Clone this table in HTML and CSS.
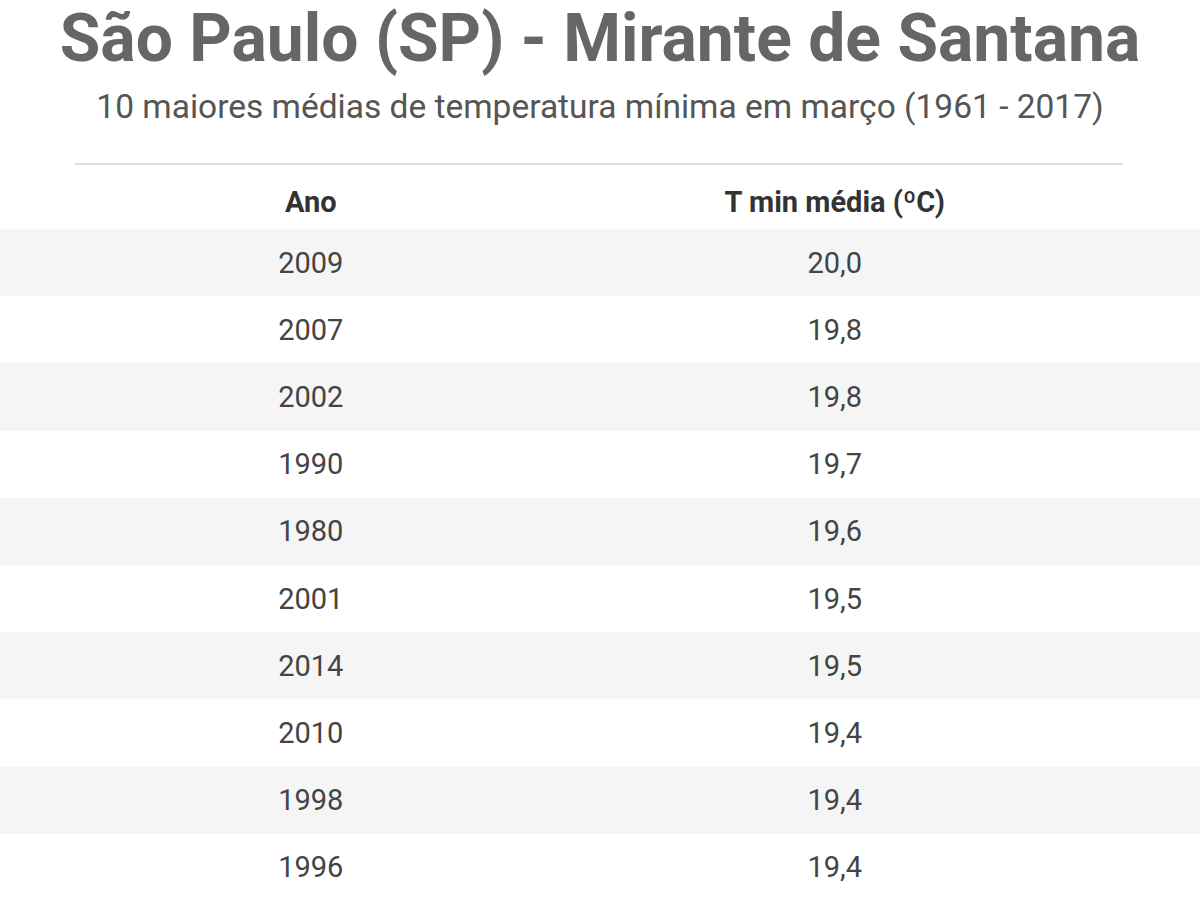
FILE: index.html
```html
<!DOCTYPE html>
<html lang="pt-BR">
<head>
<meta charset="utf-8">
<title>São Paulo (SP) - Mirante de Santana</title>
<link rel="stylesheet" href="styles.css">
</head>
<body>
<main class="chart">
  <header class="chart-head">
    <h1 class="title">São Paulo (SP) - Mirante de Santana</h1>
    <p class="subtitle">10 maiores médias de temperatura mínima em março (1961 - 2017)</p>
  </header>
  <div class="rule"></div>
  <div class="table">
    <div class="row head"><span>Ano</span><span>T min média (ºC)</span></div>
    <div class="row alt"><span>2009</span><span>20,0</span></div>
    <div class="row"><span>2007</span><span>19,8</span></div>
    <div class="row alt"><span>2002</span><span>19,8</span></div>
    <div class="row"><span>1990</span><span>19,7</span></div>
    <div class="row alt"><span>1980</span><span>19,6</span></div>
    <div class="row"><span>2001</span><span>19,5</span></div>
    <div class="row alt"><span>2014</span><span>19,5</span></div>
    <div class="row"><span>2010</span><span>19,4</span></div>
    <div class="row alt"><span>1998</span><span>19,4</span></div>
    <div class="row"><span>1996</span><span>19,4</span></div>
  </div>
</main>
</body>
</html>
```
FILE: styles.css
```css
html, body {
  margin: 0;
  padding: 0;
  background: #ffffff;
  overflow: hidden;
}
body {
  font-family: Roboto, "Liberation Sans", sans-serif;
}
.chart {
  width: 1200px;
  height: 900px;
  overflow: hidden;
}
.chart-head {
  padding-top: 0;
  text-align: center;
}
.title {
  margin: 0;
  font-size: 66px;
  line-height: normal;
  font-weight: 700;
  color: #666666;
}
.subtitle {
  margin: 13px 0 0;
  font-size: 33.5px;
  line-height: 34px;
  font-weight: 400;
  color: #555555;
}
.rule {
  margin: 39px 77px 0 75px;
  height: 2px;
  background: #dedede;
}
.row {
  display: grid;
  grid-template-columns: 45% 55%;
  align-items: center;
  padding: 0 77px 0 75px;
  height: 67.2px;
  font-size: 29px;
  color: #444444;
  text-align: center;
}
.row.head {
  height: auto;
  padding-top: 20px;
  padding-bottom: 10px;
  font-size: 29px;
  line-height: 34px;
  font-weight: 700;
  color: #333333;
  align-items: start;
}
.row.alt {
  background: #f5f5f5;
}
```
